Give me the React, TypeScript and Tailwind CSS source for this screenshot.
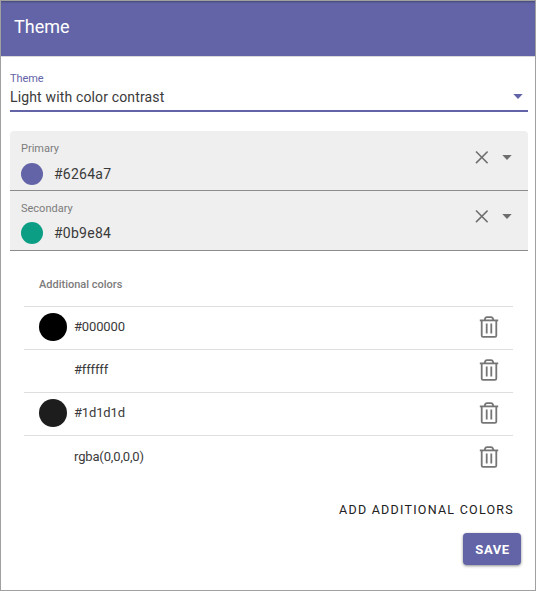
import React from "react";

function Caret({ className }: { className: string }) {
  return (
    <svg width="10" height="5" viewBox="0 0 10 5" className={className} fill="currentColor">
      <path d="M0.300 0h9.400L5 5z" />
    </svg>
  );
}

function CloseIcon() {
  return (
    <svg width="13" height="13" viewBox="0 0 13 13" fill="none" stroke="#6e6e6e" strokeWidth="1.5">
      <path d="M1 0.500 12.600 12.100M12.600 0.500 1 12.100" />
    </svg>
  );
}

function TrashIcon() {
  return (
    <svg width="20" height="22" viewBox="0 0 20 22" fill="none" stroke="#757575" strokeWidth="1.8">
      <path d="M0.800 4.400h18.400" />
      <path d="M5.700 4.200Q6 1.100 8 1.100h4q2 0 2.300 3.100" />
      <path d="M2.700 4.200v15.200q0 1.400 1.400 1.400h11.800q1.400 0 1.400-1.400V4.200" />
      <path d="M7.700 7.500v10M12.300 7.500v10" />
    </svg>
  );
}

function ColorField({ label, value, swatch, valueTop, iconTop }: { label: string; value: string; swatch: string; valueTop: string; iconTop: string }) {
  return (
    <div className="flex h-[60px] justify-between border-b border-[#8c8c8c] bg-[#efefef] pl-[11px] pr-4 first:rounded-t">
      <div>
        <div className="mt-[11px] h-[14px] text-[11px] leading-[14px] text-[#7c7c7c]">{label}</div>
        <div className={`flex items-center gap-[11px] ${valueTop}`}>
          <span className={`size-[22px] rounded-full ${swatch}`} />
          <span className="text-[14px] leading-[22px] tracking-[0.25px] text-[#3a3a3a]">{value}</span>
        </div>
      </div>
      <div className={`flex h-[13px] items-center gap-[14px] ${iconTop}`}>
        <CloseIcon />
        <Caret className="text-[#6e6e6e]" />
      </div>
    </div>
  );
}

const colors = [
  { value: "#000000", swatch: "bg-black" },
  { value: "#ffffff", swatch: "bg-white" },
  { value: "#1d1d1d", swatch: "bg-[#1d1d1d]" },
  { value: "rgba(0,0,0,0)", swatch: "bg-transparent" },
];

export default function App() {
  return (
    <div className="flex h-[591px] w-[536px] flex-col border border-[#a0a0a0] bg-white font-[Roboto,sans-serif]">
      <header className="flex h-14 items-center border-b border-[#d9d9dc] bg-[#6264a7] pb-[4px] pl-[13px] text-[18px] font-normal text-white shadow-[inset_0_2px_2px_-1px_rgba(0,0,0,0.3)]">
        Theme
      </header>
      <main className="flex flex-col pl-[9px] pr-[7px]">
        <div className="flex h-[55px] items-start justify-between border-b-2 border-[#6264a7] pr-[5px]">
          <div>
            <div className="mt-[15px] h-[14px] text-[11px] leading-[14px] tracking-[-0.1px] text-[#6264a7]">Theme</div>
            <div className="mt-px text-[14px] leading-5 tracking-[0.15px] text-[#3a3a3a]">Light with color contrast</div>
          </div>
          <Caret className="mt-[37px] text-[#6264a7]" />
        </div>

        <div className="mt-[19px]">
          <ColorField label="Primary" value="#6264a7" swatch="bg-[#6264a7]" valueTop="mt-[7px]" iconTop="mt-[20px]" />
          <ColorField label="Secondary" value="#0b9e84" swatch="bg-[#0b9e84]" valueTop="mt-[6px]" iconTop="mt-[19px]" />
        </div>

        <section className="ml-[14px] mr-[15px]">
          <h2 className="h-[55px] pl-[15px] pt-[27px] text-[11px] font-medium leading-[14px] text-[#7c7c7c]">
            Additional colors
          </h2>
          <ul>
            {colors.map((c) => (
              <li key={c.value} className="flex h-[43px] items-center border-t border-[#dedede] pb-[2px] pl-[15px] pr-[14px] last:pb-0">
                <span className={`size-[28px] rounded-full ${c.swatch}`} />
                <span className="ml-[7px] text-[13px] leading-5 tracking-[-0.15px] text-[#3a3a3a]">{c.value}</span>
                <span className="ml-auto"><TrashIcon /></span>
              </li>
            ))}
          </ul>
        </section>
      </main>
      <footer className="flex flex-col items-end pr-[14px]">
        <button className="mr-[7px] mt-[22px] h-5 text-[12.5px] leading-5 tracking-[1.25px] text-[#212121]">
          ADD ADDITIONAL COLORS
        </button>
        <button className="mt-[13px] h-8 w-[58px] rounded bg-[#6264a7] pl-px pt-px text-[13px] font-bold tracking-[0.6px] text-white shadow-[0_1px_3px_rgba(0,0,0,0.45)]">
          SAVE
        </button>
      </footer>
    </div>
  );
}
